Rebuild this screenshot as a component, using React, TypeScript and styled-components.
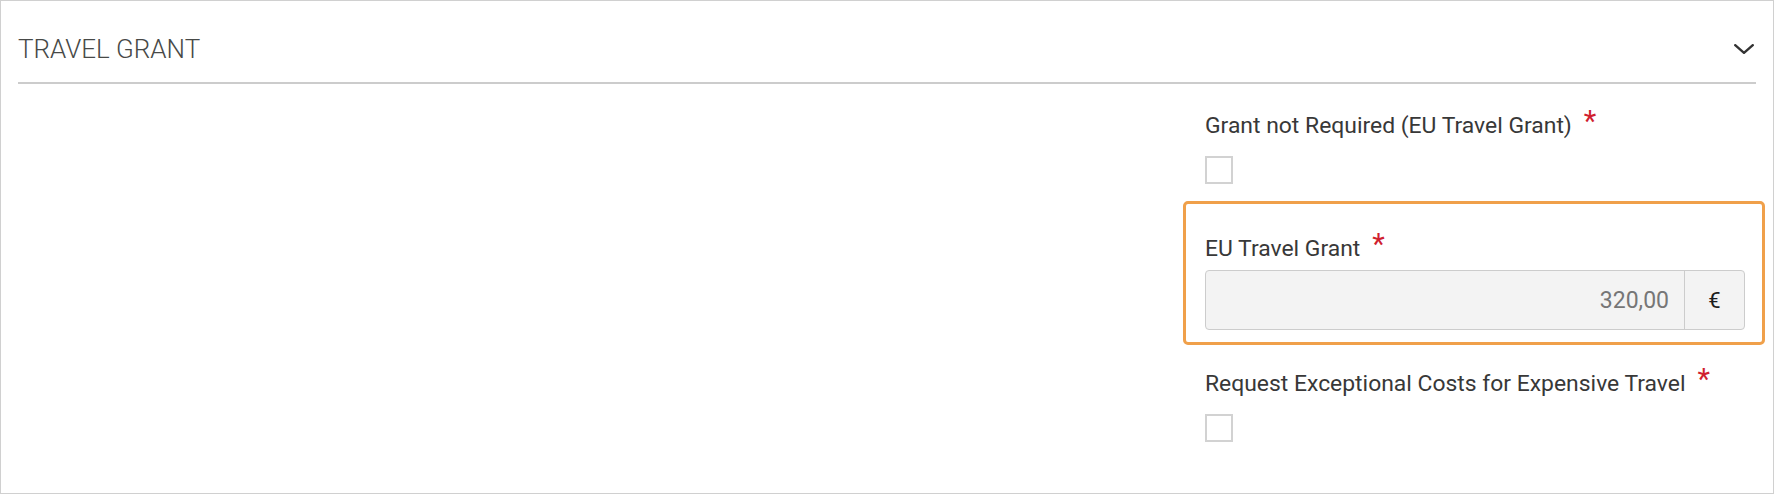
import React from "react";
import styled, { createGlobalStyle } from "styled-components";

const GlobalStyle = createGlobalStyle`
  html, body {
    margin: 0;
    padding: 0;
    background: #ffffff;
  }
  body {
    font-family: Roboto, "Liberation Sans", Arial, sans-serif;
  }
  * { box-sizing: border-box; }
`;

const Panel = styled.section`
  width: 1774px;
  height: 494px;
  border: 1px solid #d0d0d0;
  padding: 0 17px;
  background: #fff;
  overflow: hidden;
`;

const Header = styled.header`
  display: flex;
  align-items: center;
  justify-content: space-between;
  padding: 33px 2px 18px 0;
  border-bottom: 2px solid #cccccc;
`;

const Title = styled.h2`
  margin: 0;
  font-family: Roboto, "Liberation Sans", Arial, sans-serif;
  font-weight: 300;
  font-size: 26px;
  line-height: 30px;
  color: #474947;
  letter-spacing: 0;
`;

const ChevronButton = styled.button`
  border: 0;
  background: transparent;
  padding: 0;
  margin: 0;
  width: 20px;
  height: 10px;
  display: flex;
  align-items: center;
  justify-content: center;
  color: #333;
  cursor: pointer;
`;

const Body = styled.div`
  display: flex;
  justify-content: flex-end;
  padding: 29px 11px 0 0;
`;

const Column = styled.div`
  width: 540px;
  display: flex;
  flex-direction: column;
`;

const Field = styled.div<{ $gapTop?: number }>`
  display: flex;
  flex-direction: column;
  margin-top: ${(p) => p.$gapTop ?? 0}px;
`;

const HighlightField = styled.div`
  display: flex;
  flex-direction: column;
  margin: 17px -20px 0 -22px;
  padding: 32px 17px 12px 19px;
  border: 3px solid #f0a04a;
  border-radius: 5px;
`;

const Label = styled.label`
  font-family: Roboto, "Liberation Sans", Arial, sans-serif;
  font-size: 22.9px;
  line-height: 26px;
  color: #383838;
  white-space: nowrap;
`;

const Asterisk = styled.span`
  color: #d0202e;
  font-size: 29px;
  line-height: 0;
  margin-left: 12px;
  vertical-align: 2px;
`;

const Checkbox = styled.span`
  display: block;
  width: 28px;
  height: 28px;
  margin-top: 17px;
  border: 2px solid #d2d2d2;
  background: #fff;
`;

const InputGroup = styled.div`
  display: flex;
  margin-top: 8px;
  height: 60px;
  border: 1px solid #cccccc;
  border-radius: 4px;
  background: #f3f3f3;
  overflow: hidden;
`;

const ValueBox = styled.div`
  flex: 1;
  display: flex;
  align-items: center;
  justify-content: flex-end;
  padding-right: 15px;
  font-family: Roboto, "Liberation Sans", Arial, sans-serif;
  font-size: 23px;
  color: #767676;
`;

const Addon = styled.div`
  width: 60px;
  border-left: 1px solid #cccccc;
  display: flex;
  align-items: center;
  justify-content: center;
  font-family: Roboto, "Liberation Sans", Arial, sans-serif;
  font-size: 22px;
  color: #1e1e1e;
`;

const Chevron = () => (
  <svg width="20" height="10" viewBox="0 0 20 10" fill="none">
    <polyline
      points="1.2,1.2 10,8.8 18.8,1.2"
      stroke="currentColor"
      strokeWidth="2.4"
      strokeLinecap="round"
      strokeLinejoin="round"
    />
  </svg>
);

export default function App() {
  return (
    <>
      <GlobalStyle />
      <Panel>
        <Header>
          <Title>TRAVEL GRANT</Title>
          <ChevronButton aria-label="Collapse">
            <Chevron />
          </ChevronButton>
        </Header>
        <Body>
          <Column>
            <Field>
              <Label>
                Grant not Required (EU Travel Grant)<Asterisk>*</Asterisk>
              </Label>
              <Checkbox />
            </Field>
            <HighlightField>
              <Label>
                EU Travel Grant<Asterisk>*</Asterisk>
              </Label>
              <InputGroup>
                <ValueBox>320,00</ValueBox>
                <Addon>€</Addon>
              </InputGroup>
            </HighlightField>
            <Field $gapTop={26}>
              <Label>
                Request Exceptional Costs for Expensive Travel<Asterisk>*</Asterisk>
              </Label>
              <Checkbox />
            </Field>
          </Column>
        </Body>
      </Panel>
    </>
  );
}
